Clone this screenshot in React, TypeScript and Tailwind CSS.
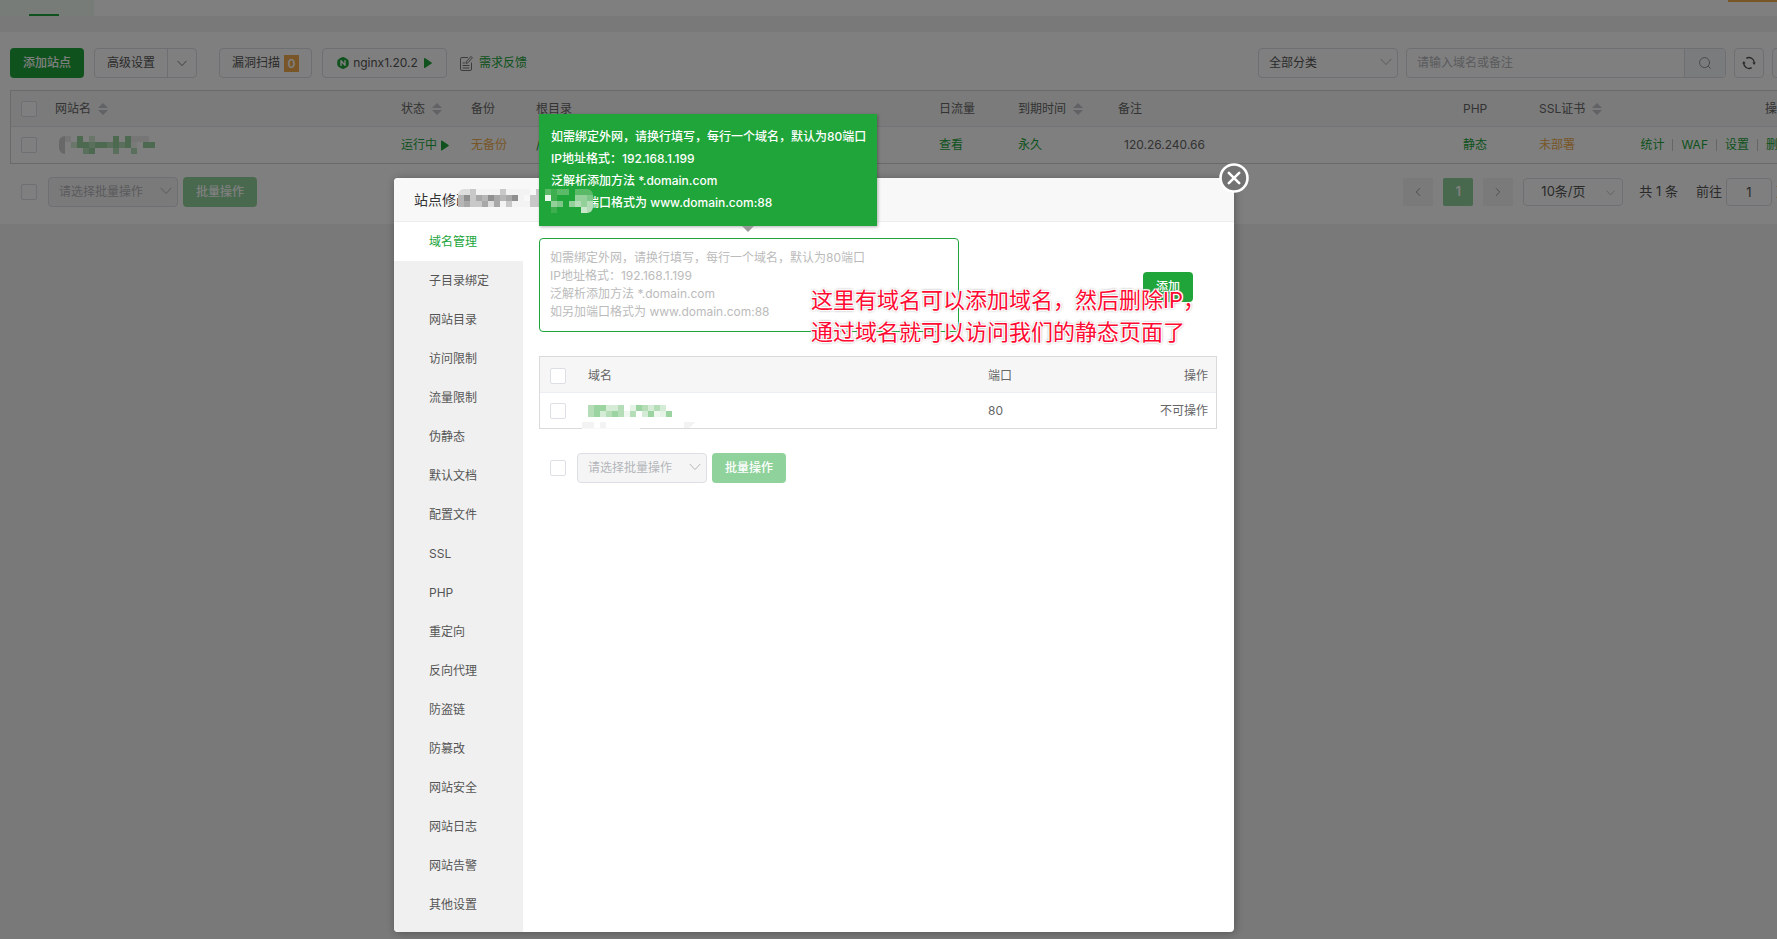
import React from "react";
import { ChevronLeft, ChevronRight } from "lucide-react";

const menuItems = [
  "域名管理",
  "子目录绑定",
  "网站目录",
  "访问限制",
  "流量限制",
  "伪静态",
  "默认文档",
  "配置文件",
  "SSL",
  "PHP",
  "重定向",
  "反向代理",
  "防盗链",
  "防篡改",
  "网站安全",
  "网站日志",
  "网站告警",
  "其他设置",
];

const domainTips = [
  "如需绑定外网，请换行填写，每行一个域名，默认为80端口",
  "IP地址格式：192.168.1.199",
  "泛解析添加方法 *.domain.com",
  "如另加端口格式为 www.domain.com:88",
];

/* Mosaic palettes: one letter per 6px cell, "." is empty */
const greenCells: Record<string, string> = {
  a: "#9bd4a0",
  b: "#b5deb8",
  c: "#d4ecd5",
  d: "#e4f3e5",
  e: "#f0f6f0",
  g: "#d0d0d0",
  h: "#ececec",
};

const grayCells: Record<string, string> = {
  a: "#8f8f8f",
  b: "#a8a8a8",
  c: "#b6b6b6",
  d: "#c8c8c8",
  e: "#dedede",
  f: "#f3f3f3",
  g: "#9fcba2",
  h: "#73bf7c",
};

const tipCells: Record<string, string> = {
  "0": "#20a53a",
  a: "#3eae4e",
  b: "#5aba67",
  c: "#7cc787",
  d: "#93d09a",
  e: "#b4ddb7",
  f: "#c9e8cb",
  w: "#e8f6e9",
};

interface MosaicProps {
  rows: string[];
  colors: Record<string, string>;
  className?: string;
}

const Mosaic = ({ rows, colors, className }: MosaicProps) => (
  <svg
    width={rows[0].length * 6}
    height={rows.length * 6}
    shapeRendering="crispEdges"
    aria-hidden="true"
    className={className}
  >
    {rows.map((row, y) =>
      row
        .split("")
        .map((cell, x) =>
          cell === "." ? null : (
            <rect
              key={`${x}-${y}`}
              x={x * 6}
              y={y * 6}
              width="6"
              height="6"
              fill={colors[cell]}
            />
          ),
        ),
    )}
  </svg>
);

const ArrowDown = ({ className }: { className?: string }) => (
  <svg
    viewBox="0 0 12 8"
    className={className}
    fill="none"
    stroke="currentColor"
    strokeLinecap="round"
    strokeLinejoin="round"
  >
    <path d="M1 1.2L6 6.6L11 1.2" />
  </svg>
);

const SortIcon = () => (
  <svg viewBox="0 0 10 12" className="h-3 w-[10px]" fill="#c0c4cc">
    <path d="M5 0L10 5H0Z" />
    <path d="M5 12L0 7H10Z" />
  </svg>
);

const PlayIcon = ({ className }: { className?: string }) => (
  <svg viewBox="0 0 8 10" className={className} fill="#20a53a">
    <path d="M0 0.6C0 0.1 0.5-0.1 0.9 0.1L7.6 4.5C8 4.8 8 5.2 7.6 5.5L0.9 9.9C0.5 10.1 0 9.9 0 9.4Z" />
  </svg>
);

const NginxIcon = () => (
  <svg viewBox="0 0 12 12" className="h-3 w-3">
    <path d="M6 0L11.4 3V9L6 12L0.6 9V3Z" fill="#20a53a" />
    <circle cx="6" cy="6" r="5.7" fill="#20a53a" />
    <path
      d="M4 8.4V3.7L8 8.3V3.6"
      fill="none"
      stroke="#fff"
      strokeWidth="1.4"
      strokeLinecap="round"
      strokeLinejoin="round"
    />
  </svg>
);

const FeedbackIcon = () => (
  <svg
    viewBox="0 0 13 15"
    className="h-[15px] w-[13px]"
    fill="none"
    stroke="#777"
    strokeLinecap="round"
    strokeLinejoin="round"
  >
    <path d="M7.5 1.5H2Q0.5 1.5 0.5 3V13Q0.5 14.5 2 14.5H10Q11.5 14.5 11.5 13V7" />
    <path d="M11.3 0.7L12.4 1.8L7.6 7L6 7.4L6.4 5.8Z" />
    <path d="M3 7H4.5M3 9.5H9M3 12H9" />
  </svg>
);

const SearchIcon = () => (
  <svg
    viewBox="0 0 12 12"
    className="h-3 w-3"
    fill="none"
    stroke="#909399"
    strokeLinecap="round"
  >
    <circle cx="5.6" cy="5.6" r="5" />
    <path d="M9.4 9.4L11.3 11.3" />
  </svg>
);

const RefreshIcon = () => (
  <svg
    viewBox="0 0 14 14"
    className="h-[14px] w-[14px]"
    fill="none"
    stroke="#555"
    strokeWidth="1.4"
  >
    <path d="M4.3 2.3A5.3 5.3 0 0 1 12.2 7.6" />
    <path d="M9.7 11.7A5.3 5.3 0 0 1 1.8 6.4" />
    <path d="M10.4 6.6H13.8L12.1 8.9Z" fill="#555" stroke="none" />
    <path d="M0.2 7.4H3.6L1.9 5.1Z" fill="#555" stroke="none" />
  </svg>
);

const Checkbox = ({ label }: { label: string }) => (
  <input
    type="checkbox"
    aria-label={label}
    className="block h-4 w-4 shrink-0 appearance-none rounded-xs border border-[#dcdfe6] bg-white"
  />
);

const BatchBar = () => (
  <>
    <div className="relative">
      <select
        disabled
        aria-label="批量操作"
        className="block h-[30px] w-[130px] appearance-none rounded border border-[#dcdfe6] bg-[#f5f5f5] px-[10px] text-[#b4b6ba] opacity-100"
      >
        <option>请选择批量操作</option>
      </select>
      <ArrowDown className="pointer-events-none absolute top-[10px] right-1.5 h-2 w-3 text-[#b4b6ba]" />
    </div>
    <button
      disabled
      className="ml-[5px] h-[30px] w-[74px] rounded bg-[#90d29c] font-medium text-white"
    >
      批量操作
    </button>
  </>
);

const Toolbar = () => (
  <div className="flex items-center justify-between">
    <div className="flex items-center">
      <button className="h-[30px] w-[74px] rounded bg-[#20a53a] font-medium text-white">
        添加站点
      </button>
      <div className="ml-[10px] flex h-[30px] rounded border border-[#dcdfe6]">
        <button className="w-[73px] border-r border-[#dcdfe6]">高级设置</button>
        <button aria-label="更多" className="flex w-[28px] items-center justify-center">
          <ArrowDown className="h-[7px] w-[10px] text-[#666]" />
        </button>
      </div>
      <button className="ml-[22px] flex h-[30px] w-[93px] items-center justify-center gap-1 rounded border border-[#dcdfe6]">
        漏洞扫描
        <span className="h-[17px] w-[15px] bg-[#f0ad4e] text-center leading-[17px] font-semibold text-white">
          0
        </span>
      </button>
      <button className="ml-[10px] flex h-[30px] w-[125px] items-center justify-center gap-1 rounded border border-[#dcdfe6]">
        <NginxIcon />
        nginx1.20.2
        <PlayIcon className="ml-0.5 h-[10px] w-2" />
      </button>
      <a href="#" className="ml-[13px] flex items-center gap-1.5 text-[#20a53a]">
        <FeedbackIcon />
        <span>需求反馈</span>
      </a>
    </div>

    <div className="flex items-center gap-2">
      <div className="relative">
        <select
          aria-label="分类"
          className="block h-[30px] w-[140px] appearance-none rounded border border-[#dcdfe6] px-[10px]"
        >
          <option>全部分类</option>
        </select>
        <ArrowDown className="pointer-events-none absolute top-[10px] right-1.5 h-2 w-3 text-[#b4b6ba]" />
      </div>
      <div className="flex h-[30px] overflow-hidden rounded border border-[#dcdfe6]">
        <input
          aria-label="搜索"
          placeholder="请输入域名或备注"
          className="w-[277px] px-[10px] outline-none placeholder:text-[#b4b6ba]"
        />
        <button
          aria-label="查询"
          className="flex w-[41px] items-center justify-center border-l border-[#dcdfe6] bg-[#f5f7fa]"
        >
          <SearchIcon />
        </button>
      </div>
      <button
        aria-label="刷新"
        className="flex h-[30px] w-[30px] items-center justify-center rounded border border-[#dcdfe6]"
      >
        <RefreshIcon />
      </button>
      <button
        aria-label="设置"
        className="h-[30px] w-[30px] rounded border border-[#dcdfe6]"
      />
    </div>
  </div>
);

const SortHead = ({ children }: { children: React.ReactNode }) => (
  <span className="flex items-center gap-[7px]">
    {children}
    <SortIcon />
  </span>
);

const SiteTable = () => (
  <div className="mt-3 border border-[#d4d4d4]">
    <table className="w-full table-fixed border-separate border-spacing-0 text-left">
      <colgroup>
        <col className="w-[44px]" />
        <col />
        <col className="w-[70px]" />
        <col className="w-[65px]" />
        <col className="w-[403px]" />
        <col className="w-[79px]" />
        <col className="w-[100px]" />
        <col className="w-[345px]" />
        <col className="w-[76px]" />
        <col className="w-[100px]" />
        <col className="w-[162px]" />
      </colgroup>
      <thead className="bg-[#f6f6f6] text-[#666] [&_th]:h-9 [&_th]:border-b [&_th]:border-[#e4e7ed] [&_th]:font-normal">
        <tr>
          <th className="pl-[10px]">
            <Checkbox label="全选" />
          </th>
          <th>
            <SortHead>网站名</SortHead>
          </th>
          <th>
            <SortHead>状态</SortHead>
          </th>
          <th>备份</th>
          <th>根目录</th>
          <th>日流量</th>
          <th>
            <SortHead>到期时间</SortHead>
          </th>
          <th>备注</th>
          <th>PHP</th>
          <th>
            <SortHead>SSL证书</SortHead>
          </th>
          <th className="pr-3 text-right">操作</th>
        </tr>
      </thead>
      <tbody className="text-[#20a53a] [&_td]:h-9">
        <tr>
          <td className="pl-[10px]">
            <Checkbox label="选择站点" />
          </td>
          <td>
            <Mosaic
              className="ml-1 rounded-l-md"
              colors={greenCells}
              rows={["gh.a.c...a.ahhh.", "g.caabaababae.aa", "g...ba...b..b..."]}
            />
          </td>
          <td>
            <span className="flex items-center gap-1">
              运行中
              <PlayIcon className="h-[11px] w-2" />
            </span>
          </td>
          <td className="text-[#f0ad4e]">无备份</td>
          <td>/www/wwwroot</td>
          <td>查看</td>
          <td>永久</td>
          <td className="pl-1.5 text-[#666]">120.26.240.66</td>
          <td>静态</td>
          <td className="text-[#f0ad4e]">未部署</td>
          <td>
            <div className="flex items-center justify-end gap-2 pr-[11px] whitespace-nowrap">
              <a href="#">统计</a>
              <span className="h-3 w-px bg-[#ccc]" />
              <a href="#">WAF</a>
              <span className="h-3 w-px bg-[#ccc]" />
              <a href="#">设置</a>
              <span className="h-3 w-px bg-[#ccc]" />
              <a href="#">删除</a>
            </div>
          </td>
        </tr>
      </tbody>
    </table>
  </div>
);

const SiteFooter = () => (
  <div className="mt-[13px] flex items-start justify-between pl-[11px]">
    <div className="flex items-center">
      <span className="mr-[11px]">
        <Checkbox label="选择全部站点" />
      </span>
      <BatchBar />
    </div>
    <div className="flex items-center pt-px pr-[13px] text-[13px]">
      <button
        disabled
        aria-label="上一页"
        className="flex h-7 w-[30px] items-center justify-center bg-[#f4f4f5] text-[#909399]"
      >
        <ChevronLeft className="h-[14px] w-[14px]" strokeWidth={1.6} />
      </button>
      <button className="ml-[10px] h-7 w-[30px] rounded-xs bg-[#90d29c] font-semibold text-white">
        1
      </button>
      <button
        disabled
        aria-label="下一页"
        className="ml-[10px] flex h-7 w-[30px] items-center justify-center bg-[#f4f4f5] text-[#909399]"
      >
        <ChevronRight className="h-[14px] w-[14px]" strokeWidth={1.6} />
      </button>
      <div className="relative ml-[10px]">
        <select
          aria-label="每页条数"
          className="block h-7 w-[100px] appearance-none rounded-sm border border-[#dcdfe6] pl-[17px]"
        >
          <option>10条/页</option>
        </select>
        <ArrowDown className="pointer-events-none absolute top-3 right-2 h-[6px] w-[9px] text-[#b4b6ba]" />
      </div>
      <span className="ml-4">共 1 条</span>
      <label className="ml-[18px] flex items-center gap-1">
        前往
        <input
          defaultValue="1"
          className="h-7 w-[46px] rounded-sm border border-[#dcdfe6] text-center"
        />
        页
      </label>
    </div>
  </div>
);

const DomainPanel = () => (
  <div className="min-w-0 flex-1 py-4 pr-[17px] pl-4">
    <div className="flex items-start justify-between">
      <textarea
        aria-label="域名"
        placeholder={domainTips.join("\n")}
        className="block h-[94px] w-[420px] resize-none rounded border border-[#20a53a] px-[10px] py-[10px] leading-[18px] outline-none placeholder:text-[#bbb]"
      />
      <button className="mt-[34px] mr-6 h-[30px] w-[50px] rounded bg-[#20a53a] font-medium text-white">
        添加
      </button>
    </div>

    <div className="relative mt-6 border border-[#dadada]">
      <table className="w-full table-fixed border-separate border-spacing-0 text-left text-[#666]">
        <colgroup>
          <col className="w-12" />
          <col className="w-[400px]" />
          <col />
          <col />
        </colgroup>
        <thead className="bg-[#f6f6f6] [&_th]:h-9 [&_th]:border-b [&_th]:border-[#ebeef5] [&_th]:pt-0.5 [&_th]:font-normal">
          <tr>
            <th className="pl-[10px]">
              <Checkbox label="全选域名" />
            </th>
            <th>域名</th>
            <th>端口</th>
            <th className="pr-2 text-right">操作</th>
          </tr>
        </thead>
        <tbody className="[&_td]:h-[35px]">
          <tr>
            <td className="pl-[10px]">
              <Checkbox label="选择域名" />
            </td>
            <td>
              <Mosaic
                colors={greenCells}
                rows={["baaccb.dabcbc.", "bacbabeb.caeda"]}
              />
            </td>
            <td>80</td>
            <td className="pr-2 text-right">不可操作</td>
          </tr>
        </tbody>
      </table>
      <svg
        width="114"
        height="7"
        className="absolute -bottom-px left-[42px]"
        shapeRendering="crispEdges"
        aria-hidden="true"
      >
        <rect y="6" width="58" height="1" fill="#f8f8f8" />
        <rect width="12" height="6" fill="#f3f3f3" />
        <rect x="18" width="6" height="6" fill="#f3f3f3" />
        <path d="M102 0H114L107 6H102Z" fill="#f3f3f3" />
      </svg>
    </div>

    <div className="mt-6 flex items-center pl-[11px]">
      <span className="mr-[11px]">
        <Checkbox label="选择全部域名" />
      </span>
      <BatchBar />
    </div>
  </div>
);

const SiteDialog = () => (
  <div
    role="dialog"
    aria-label="站点修改"
    className="absolute top-[178px] left-[394px] w-[840px] rounded bg-white shadow-[1px_1px_8px_rgba(0,0,0,0.3)]"
  >
    <div className="relative h-11 rounded-t border-b border-[#eee] bg-[#f8f8f8] pl-5 text-sm leading-[43px] text-[#333]">
      站点修改
      <Mosaic
        className="absolute top-[11px] left-16 rounded-l-md bg-[#f8f8f8]"
        colors={grayCells}
        rows={[
          "eedffffdffff.d.",
          "cadbcabcbaf.ddg",
          "cbddbebfdfffddh",
          "...............",
        ]}
      />
    </div>

    <div className="flex">
      <ul className="w-[129px] rounded-bl bg-[#f0f0f0] pb-2">
        {menuItems.map((item, i) => (
          <li key={item}>
            <a
              href="#"
              className={
                i === 0
                  ? "block h-[39px] bg-white pl-[35px] leading-[39px] text-[#20a53a]"
                  : "block h-[39px] pl-[35px] leading-[39px] text-[#555]"
              }
            >
              {item}
            </a>
          </li>
        ))}
      </ul>
      <DomainPanel />
    </div>

    {/* Hint above the domain box */}
    <div className="absolute -top-16 left-[145px] w-[338px] bg-[#20a53a] p-3 leading-[22px] font-medium text-white shadow-[1px_1px_3px_rgba(0,0,0,0.3)]">
      {domainTips.map((tip) => (
        <p key={tip} className="whitespace-nowrap">
          {tip}
        </p>
      ))}
      <Mosaic
        className="absolute top-[75px] left-0 rounded-r-md"
        colors={tipCells}
        rows={["0babb0bbb", "0wa000ddc", "00dc0dede", "00a0000fe"]}
      />
      <svg
        viewBox="0 0 12 6"
        className="absolute top-full left-[203px] h-1.5 w-3"
        fill="#999"
      >
        <path d="M0 0H12L6 6Z" />
      </svg>
    </div>

    {/* Note written over the dialog */}
    <p className="absolute top-[106px] left-[417px] text-[22px] leading-8 whitespace-nowrap text-[#ff0a32] [text-shadow:-1px_-1px_0_#fff,1px_-1px_0_#fff,-1px_1px_0_#fff,1px_1px_0_#fff,0_0_2px_#fff,0_0_3px_#888,0_0_3px_#888]">
      这里有域名可以添加域名，然后删除IP，
      <br />
      通过域名就可以访问我们的静态页面了
    </p>

    <button
      aria-label="关闭"
      className="absolute -top-[15px] -right-[15px] h-[30px] w-[30px]"
    >
      <svg viewBox="0 0 30 30" fill="#737373" stroke="#fff">
        <circle cx="15" cy="15" r="13.5" strokeWidth="2.6" />
        <path
          d="M9.8 9.8L20.2 20.2M20.2 9.8L9.8 20.2"
          strokeWidth="2.6"
          strokeLinecap="round"
        />
      </svg>
    </button>
  </div>
);

const App = () => (
  <div className="relative min-h-screen overflow-hidden bg-[#f2f2f2] font-['Inter','Noto_Sans_CJK_SC',sans-serif] text-xs text-[#555]">
    <div className="w-[calc(100%+35px)]">
      <div className="flex h-4 items-end bg-white">
        <div className="flex h-4 w-[94px] items-end bg-[#f0f9f1] pl-[29px]">
          <span className="h-0.5 w-[30px] bg-[#20a53a]" />
        </div>
        <div className="mr-[10px] ml-auto h-full w-[74px]">
          <div className="h-0.5 bg-[#f0ad4e]" />
        </div>
      </div>
      <main className="mt-4 bg-white px-[10px] pt-4 pb-[17px]">
        <Toolbar />
        <SiteTable />
        <SiteFooter />
      </main>
    </div>
    <div className="absolute inset-0 bg-black/50" />
    <SiteDialog />
  </div>
);

export default App;
